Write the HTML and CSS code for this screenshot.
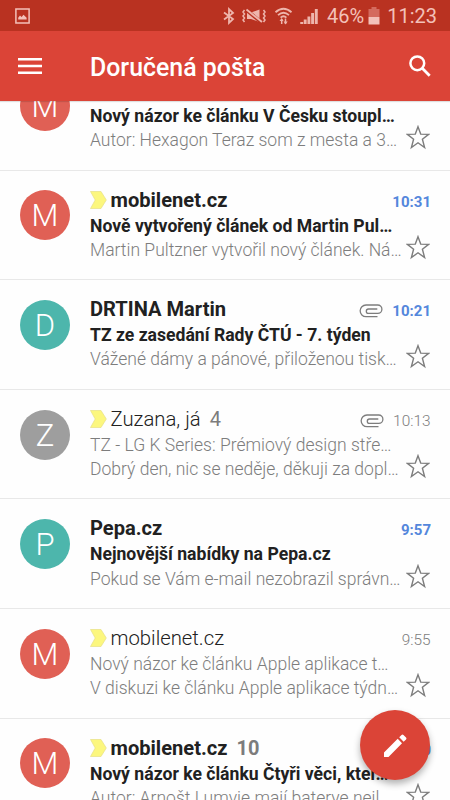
FILE: index.html
```html
<!DOCTYPE html>
<html lang="cs">
<head>
<meta charset="utf-8">
<title>Doručená pošta</title>
<link rel="stylesheet" href="styles.css">
</head>
<body>
<svg class="defs" width="0" height="0">
  <symbol id="star" viewBox="0 0 24 25"><path d="M12 1.700 14.700 9.100 22.600 9.400 16.400 14.300 18.600 22.500 12 17.800 5.400 22.500 7.600 14.300 1.400 9.400 9.300 9.100Z" fill="none" stroke="#7d7d7d" stroke-width="1.400"/></symbol>
  <symbol id="tag" viewBox="0 0 17 18"><path d="M.5.5H11L16.3 9 11 17.5H.5L5.2 9Z" fill="#fcf77e" stroke="#e6df86" stroke-width=".7"/></symbol>
  <symbol id="clip" viewBox="0 0 24 14"><path d="M18.500 12.700H7A5.800 5.800 0 0 1 7 1H18.700A4.200 4.200 0 0 1 18.700 9.400H9.500A2.200 2.200 0 0 1 9.500 5H18.300" fill="none" stroke="#7d7d7d" stroke-width="1.300"/></symbol>
</svg>
<div class="screen">
  <header class="status">
    <svg class="photo" viewBox="0 0 15 16"><path d="M.9.9H14.1V15H.9Z" fill="none" stroke="#f3c1b9" stroke-width="1.5"/><path d="M3.2 11.5V9.8L5 7.5 6.6 9 8.5 6.7 11.6 9.8V11.5Z" fill="#f3c1b9"/></svg>
    <svg class="indicators" viewBox="0 0 96 20" fill="none" stroke="#eeb5ac">
      <path d="M2 6.500 11 13 7 16.800V3.200L11 7 2 13.500" stroke-width="1.800"/>
      <path d="M22.5 4 21 6 22.5 8 21 10 22.5 12 21 14 22.5 16M41.5 4 43 6 41.5 8 43 10 41.5 12 43 14 41.5 16" stroke-width="1.500"/>
      <path d="M25 6.500H29L37.500 3.500V16L29 13H25Z" fill="#eeb5ac" stroke="none"/>
      <path d="M24.500 4.200 40 16.800" stroke="#b93221" stroke-width="3.600"/>
      <path d="M24.500 3.500 40 16" stroke-width="1.900"/>
      <path d="M53.500 6.300Q61.500-.7 69.500 6.300M56 9.200Q61.500 4.200 67 9.200M58.600 11.600Q61.500 9 64.400 11.600" stroke-width="1.800"/>
      <path d="M59.700 18V13M63.500 12.500V18" stroke-width="1.500"/>
      <path d="M57.500 15 59.700 12 61.600 15ZM61.600 15.500 63.500 18.500 65.700 15.500Z" fill="#eeb5ac" stroke="none"/>
      <path d="M79.700 18V16M83.200 18V13.500M86.900 18V10.500M90.600 18V7M94.300 18V3" stroke-width="2.900"/>
    </svg>
    <span class="percent">46%</span>
    <svg class="battery" viewBox="0 0 12 18"><path d="M3.500 0H8.500V2H11.500V10H.5V2H3.500Z" fill="#d46b5e"/><path d="M.5 10H11.500V17.500H.5Z" fill="#f3c1b9"/></svg>
    <span class="clock">11:23</span>
  </header>
  <nav class="toolbar">
    <svg class="menu" viewBox="0 0 24 16"><path d="M0 1.300H24M0 8H24M0 14.700H24" stroke="#fff" stroke-width="2.400"/></svg>
    <h1>Doručená pošta</h1>
    <svg class="search" viewBox="0 0 22 22" fill="none" stroke="#fff" stroke-width="2.500"><circle cx="8.300" cy="8.300" r="6.900"/><path d="M13 13 20.700 20.700" stroke-width="2.800"/></svg>
  </nav>
  <main class="viewport">
    <div class="list">
      <article class="mail unread">
        <div class="avatar red">M</div>
        <div class="body">
          <div class="top"></div>
          <div class="subject"><span>Nový názor ke článku V Česku stoupl…</span></div>
          <div class="bottom"><span class="snippet">Autor: Hexagon Teraz som z mesta a 3…</span><svg class="star"><use href="#star"/></svg></div>
        </div>
      </article>
      <article class="mail unread">
        <div class="avatar red">M</div>
        <div class="body">
          <div class="top"><svg class="tag"><use href="#tag"/></svg><span class="sender">mobilenet.cz</span><time>10:31</time></div>
          <div class="subject"><span>Nově vytvořený článek od Martin Pul…</span></div>
          <div class="bottom"><span class="snippet">Martin Pultzner vytvořil nový článek. Ná…</span><svg class="star"><use href="#star"/></svg></div>
        </div>
      </article>
      <article class="mail unread">
        <div class="avatar teal">D</div>
        <div class="body">
          <div class="top"><span class="sender">DRTINA Martin</span><svg class="clip"><use href="#clip"/></svg><time>10:21</time></div>
          <div class="subject"><span>TZ ze zasedání Rady ČTÚ - 7. týden</span></div>
          <div class="bottom"><span class="snippet">Vážené dámy a pánové, přiloženou tisk…</span><svg class="star"><use href="#star"/></svg></div>
        </div>
      </article>
      <article class="mail">
        <div class="avatar gray">Z</div>
        <div class="body">
          <div class="top"><svg class="tag"><use href="#tag"/></svg><span class="sender">Zuzana, já</span><span class="count">4</span><svg class="clip"><use href="#clip"/></svg><time>10:13</time></div>
          <div class="subject"><span>TZ - LG K Series: Prémiový design stře…</span></div>
          <div class="bottom"><span class="snippet">Dobrý den, nic se neděje, děkuji za dopl…</span><svg class="star"><use href="#star"/></svg></div>
        </div>
      </article>
      <article class="mail unread">
        <div class="avatar teal">P</div>
        <div class="body">
          <div class="top"><span class="sender">Pepa.cz</span><time>9:57</time></div>
          <div class="subject"><span>Nejnovější nabídky na Pepa.cz</span></div>
          <div class="bottom"><span class="snippet">Pokud se Vám e-mail nezobrazil správn…</span><svg class="star"><use href="#star"/></svg></div>
        </div>
      </article>
      <article class="mail">
        <div class="avatar red">M</div>
        <div class="body">
          <div class="top"><svg class="tag"><use href="#tag"/></svg><span class="sender">mobilenet.cz</span><time>9:55</time></div>
          <div class="subject"><span>Nový názor ke článku Apple aplikace t…</span></div>
          <div class="bottom"><span class="snippet">V diskuzi ke článku Apple aplikace týdn…</span><svg class="star"><use href="#star"/></svg></div>
        </div>
      </article>
      <article class="mail unread">
        <div class="avatar red">M</div>
        <div class="body">
          <div class="top"><svg class="tag"><use href="#tag"/></svg><span class="sender">mobilenet.cz</span><span class="count">10</span><time>9:50</time></div>
          <div class="subject"><span>Nový názor ke článku Čtyři věci, kter…</span></div>
          <div class="bottom"><span class="snippet">Autor: Arnošt Lumvie mají baterye nejl</span><svg class="star"><use href="#star"/></svg></div>
        </div>
      </article>
    </div>
  </main>
  <button class="compose" aria-label="Nová zpráva"><svg viewBox="0 0 24 24"><path d="M0 24V19.300L14.300 5 18.800 9.700 4.700 24ZM15.900 3.400 18.300 1Q19.300 0 20.300 1L23 3.700Q24 4.800 23 5.800L20.500 8.100Z" fill="#fff"/></svg></button>
</div>
</body>
</html>
```
FILE: styles.css
```css
* { box-sizing: border-box; }
body { margin: 0; font-family: Roboto, "Liberation Sans", sans-serif; background: #fefefe; }
svg { display: block; flex: none; }
.defs { position: absolute; }
.screen { position: relative; width: 450px; height: 800px; overflow: hidden; display: flex; flex-direction: column; }
.status { flex: none; height: 31px; background: #b93221; display: flex; align-items: center; padding: 0 13px 0 15px; color: #f3c1b9; font-size: 20px; line-height: 31px; }
.photo { width: 15px; height: 16px; }
.indicators { width: 96px; height: 20px; margin-left: 192px; }
.percent { width: 37px; margin-left: 9px; white-space: nowrap; padding-top: 2px; }
.battery { width: 12px; height: 18px; margin-left: 4px; }
.clock { margin-left: auto; padding-top: 2px; }
.toolbar { flex: none; height: 70px; background: #db4437; display: flex; align-items: center; padding: 0 19px 0 18px; color: #fff; box-shadow: 0 1px 1px rgba(0,0,0,.12); z-index: 1; }
.menu { width: 24px; height: 16px; }
h1 { margin: 3px 0 0 48px; font-size: 24.900px; font-weight: 500; line-height: 32px; white-space: nowrap; }
.search { width: 22px; height: 22px; margin-left: auto; margin-top: -1px; }
.viewport { flex: 1; min-height: 0; overflow: hidden; }
.list { margin-top: -40px; }
.mail { height: 109.600px; display: flex; gap: 20px; padding: 15px 19px 0 20px; border-bottom: 1px solid #e8e8e8; }
.avatar { flex: none; width: 50px; height: 50px; margin-top: 4.800px; border-radius: 50%; color: #fff; font-size: 31px; font-weight: 300; line-height: 51px; text-align: center; }
.red { background: #e06055; }
.teal { background: #4db6ac; }
.gray { background: #9e9e9e; }
.body { flex: 1; min-width: 0; white-space: nowrap; color: #7d7d7d; font-weight: 300; font-size: 17.520px; }
.top { height: 28px; line-height: 28px; display: flex; }
.tag { width: 17px; height: 18px; margin: 5px 3.500px 0 0; }
.sender { font-size: 20.300px; color: #212121; }
.count { font-size: 20px; font-weight: 400; margin-left: 9px; color: #7c7c7c; }
time { font-size: 15.400px; margin-left: auto; padding: 2px .5px 0 0; font-weight: 300; }
.clip { width: 24px; height: 14px; margin: 9px 0 0 auto; }
.clip + time { margin-left: 9px; }
.subject { height: 24.300px; line-height: 25px; }
.bottom { height: 25px; line-height: 25.500px; display: flex; }
.snippet { flex: 1; min-width: 0; }
.star { width: 24px; height: 25px; margin: -3px 1.500px 0 0; }
.unread .sender, .unread .subject { color: #212121; font-weight: 700; }
.unread .sender { font-size: 20.100px; }
.unread .subject { font-size: 17.600px; }
.unread .count { font-weight: 700; }
.unread time { font-size: 15px; color: #5487dc; font-weight: 700; padding-right: 0; }
.compose { position: absolute; left: 360px; top: 710px; width: 70px; height: 70px; border: 0; border-radius: 50%; padding: 0; background: #db4437; box-shadow: 0 4px 7px rgba(0,0,0,.3); display: flex; align-items: center; justify-content: center; z-index: 2; }
.compose svg { width: 23px; height: 23px; }
```
